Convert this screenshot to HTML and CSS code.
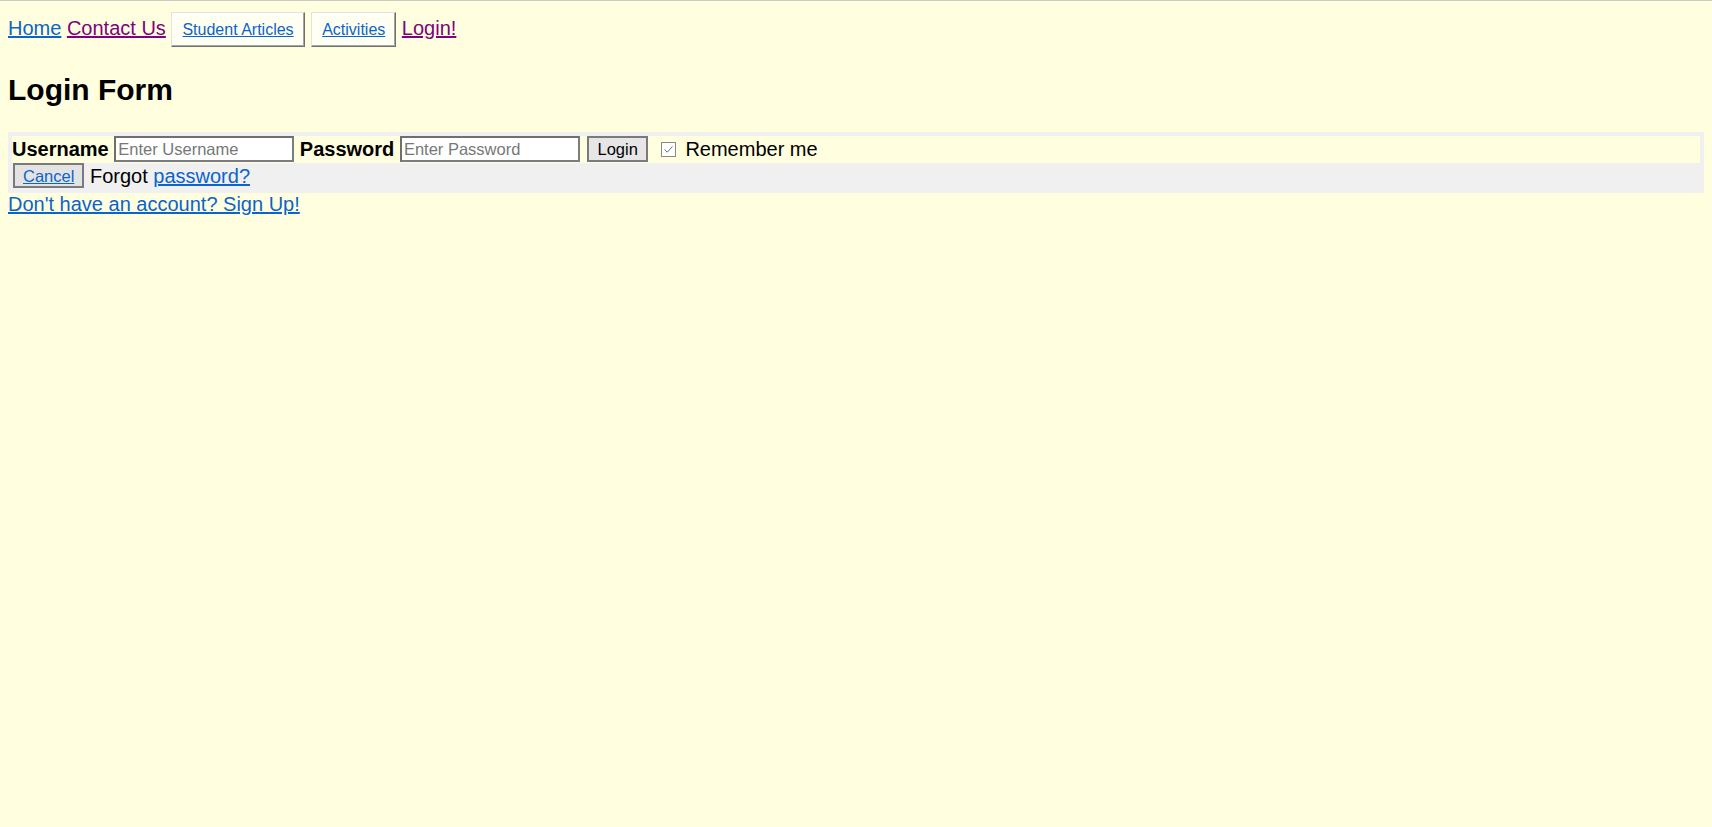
FILE: index.html
```html
<!DOCTYPE html>
<html lang="en">
<head>
<meta charset="utf-8">
<title>Login Form</title>
<link rel="stylesheet" href="styles.css">
</head>
<body>
<nav class="nav"><a href="#" class="link">Home</a> <a href="#" class="link visited">Contact Us</a> <button class="navbtn" type="button"><span class="link">Student Articles</span></button> <button class="navbtn" type="button"><span class="link">Activities</span></button> <a href="#" class="link visited">Login!</a></nav>
<h2 class="title">Login Form</h2>
<form class="form" action="#">
  <div class="row-main"><label class="lbl">Username</label> <input class="field" type="text" placeholder="Enter Username"> <label class="lbl">Password</label> <input class="field" type="password" placeholder="Enter Password"> <button class="btn" type="button">Login</button><span class="check"><svg width="15" height="15" viewBox="0 0 15 15"><rect x="0.5" y="0.5" width="14" height="14" fill="#fff" stroke="#8a8a8a"/><path d="M3.5 7.5 L6.2 10.2 L11.5 4.5" fill="none" stroke="#5f6f8c" stroke-width="1"/></svg></span> Remember me</div>
  <div class="row-sub"><button class="btn cancel" type="button"><span class="link">Cancel</span></button> Forgot <a href="#" class="link">password?</a></div>
</form>
<a href="#" class="link">Don't have an account? Sign Up!</a>
</body>
</html>
```
FILE: styles.css
```css
html {
  border-top: 1px solid #cacaca;
  background: #ffffe0;
}
body {
  margin: 8px;
  font-family: "Liberation Sans", Arial, sans-serif;
  font-size: 20px;
  color: #000;
  background: #ffffe0;
}
.link {
  color: #0b63ce;
  text-decoration: underline;
}
.visited {
  color: #800080;
}
.nav {
  padding-top: 3px;
}
.navbtn {
  font-family: "Liberation Sans", Arial, sans-serif;
  font-size: 16px;
  line-height: 18px;
  height: 35px;
  box-sizing: border-box;
  padding: 7px 10px 6px;
  background: #fffff2;
  border: 1px solid #e2e2e2;
  border-right-color: #707070;
  border-bottom-color: #707070;
  box-shadow: inset -1px -1px 0 #a6a6a6, inset 1px 1px 0 #ffffff;
  margin: 0;
  vertical-align: baseline;
}
.navbtn + .navbtn {
  margin-left: 1px;
}
.title {
  font-size: 30px;
  font-weight: bold;
  margin: 26px 0 25px;
}
.form {
  background: #f0f0f0;
  padding: 4px;
  margin: 0;
}
.row-main {
  background: #ffffe0;
  height: 27px;
  line-height: 27px;
}
.row-sub {
  height: 26px;
  line-height: 26px;
}
.lbl {
  font-weight: bold;
}
.field {
  box-sizing: border-box;
  width: 180px;
  height: 26px;
  border: 2px solid #7c7c7c;
  border-top-color: #6f6f6f;
  border-left-color: #6f6f6f;
  padding: 1px 2px;
  font-family: "Liberation Sans", Arial, sans-serif;
  font-size: 16.5px;
  background: #fff;
  vertical-align: top;
  margin: 0;
}
.field::placeholder {
  color: #777;
}
.btn {
  box-sizing: border-box;
  height: 26px;
  padding: 0 8px;
  font-family: "Liberation Sans", Arial, sans-serif;
  font-size: 16.5px;
  line-height: 20px;
  background: #e6e6e6;
  border: 2px solid #7a7a7a;
  color: #000;
  vertical-align: top;
  margin: 0 0 0 2px;
}
.cancel {
  height: 25px;
  padding: 0 8px;
  margin-left: 1px;
  margin-top: 0;
  background: #e3e3e3;
}
.check {
  display: inline-block;
  width: 15px;
  height: 15px;
  margin: 0 4px 0 13px;
  vertical-align: -1px;
  line-height: 0;
}
.check svg {
  display: block;
}
```
